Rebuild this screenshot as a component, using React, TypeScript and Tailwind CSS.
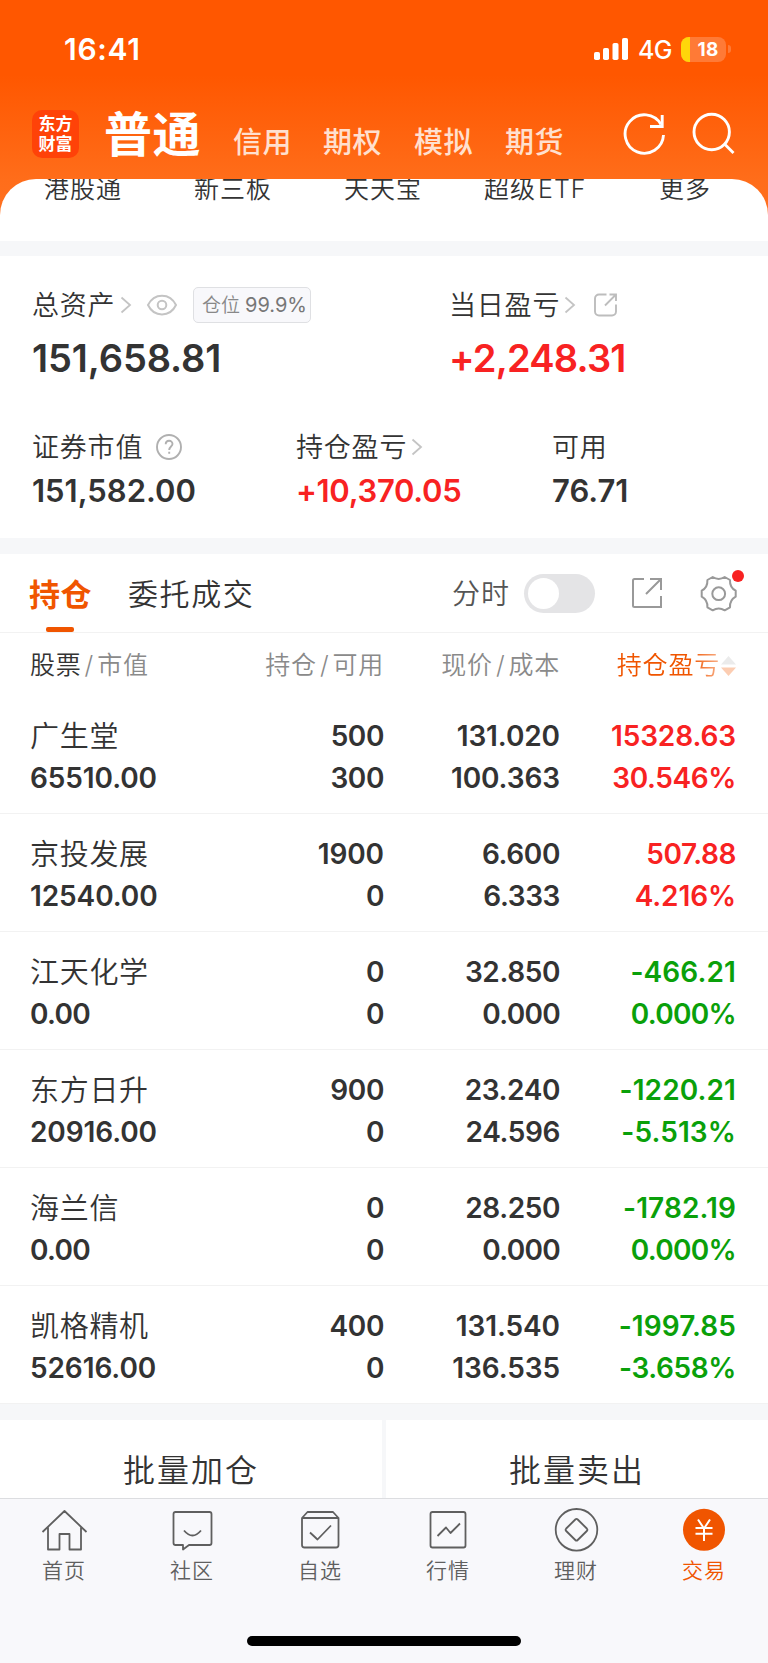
import type { ReactNode } from "react";

const SANS = "font-['Inter','Noto_Sans_CJK_SC',sans-serif]";

function Chevron({ className = "" }: { className?: string }) {
  return (
    <svg className={className} width="12" height="18" viewBox="0 0 12 18" fill="none" stroke="#c4c4c4" strokeWidth="1.8">
      <path d="M1.500 1.500 10 9 1.500 16.500" />
    </svg>
  );
}

function StatusBar() {
  return (
    <div className="flex h-[98px] items-center pl-[64px] pr-[37px] text-white">
      <span className="w-[531px] text-[30px] leading-none font-semibold tracking-[0.7px]">16:41</span>
      <svg width="34" height="24" viewBox="0 0 34 24" fill="#fff" className="mr-[10px] shrink-0">
        <rect x="0" y="15" width="6" height="8" rx="1.8" />
        <rect x="9" y="11" width="6" height="12" rx="1.8" />
        <rect x="18.500" y="6" width="6" height="17" rx="1.800" />
        <rect x="28" y="1" width="6" height="22" rx="1.800" />
      </svg>
      <span className="w-[43px] shrink-0 pt-[3px] text-[25px] leading-none font-medium tracking-[-0.6px]">4G</span>
      <div className="flex h-[25px] w-[45px] shrink-0 items-center overflow-hidden rounded-[8px] bg-[#ff7a36]">
        <span className="h-full w-[9px] bg-[#ffd60a]" />
        <span className="flex-1 text-center text-[19px] leading-none font-bold tracking-[0.3px]">18</span>
      </div>
      <span className="ml-[2px] h-[8px] w-[3px] shrink-0 rounded-r-full bg-[#ff7a36]" />
    </div>
  );
}

function TopNav() {
  return (
    <div className="flex h-[81px] pl-[32px] text-[29px] leading-none font-medium tracking-[0.5px] text-[#ffe0cf]">
      <div className="mt-[12px] flex h-[48px] w-[47px] flex-col items-center justify-center rounded-[10px] bg-[#ff4208] text-[17px] leading-[20px] font-bold tracking-[0px] text-white">
        <span>东方</span>
        <span>财富</span>
      </div>
      <span className="mt-[13px] ml-[25px] w-[129px] text-[48px] font-bold tracking-[0.5px] text-white">普通</span>
      <span className="mt-[30px] w-[90px]">信用</span>
      <span className="mt-[30px] w-[91px]">期权</span>
      <span className="mt-[30px] w-[91px]">模拟</span>
      <span className="mt-[30px] w-[117px]">期货</span>
      <svg className="mt-[12px]" width="46" height="46" viewBox="0 0 46 46" fill="none" stroke="#fff" strokeWidth="2.900">
        <path d="M39 14.500A19.200 19.200 0 1 0 41.500 25" />
        <path d="M40.200 5V16.500H28" />
      </svg>
      <svg className="mt-[12px] ml-[23px]" width="46" height="46" viewBox="0 0 46 46" fill="none" stroke="#fff" strokeWidth="2.900">
        <circle cx="20.700" cy="22" r="17.700" />
        <path d="M33 33.500 42.500 43" />
      </svg>
    </div>
  );
}

function Shortcuts() {
  return (
    <div className="h-[62px] overflow-hidden rounded-t-[36px] bg-white">
      <div className="-mt-[2px] flex pl-[44px] text-[25px] leading-none font-[350] tracking-[1px] text-[#333]">
        <span className="w-[150px]">港股通</span>
        <span className="w-[150px]">新三板</span>
        <span className="w-[140px]">天天宝</span>
        <span className="w-[175px]">超级<span className="ml-[2px]">ETF</span></span>
        <span>更多</span>
      </div>
    </div>
  );
}

function Stat({ label, value, extra, className = "", tone = "text-[#333]" }: { label: string; value: string; extra?: ReactNode; className?: string; tone?: string }) {
  return (
    <div className={className}>
      <div className="flex h-[38px] items-center">
        <span className="text-[27px] leading-none font-[350] tracking-[0.8px] text-[#333]">{label}</span>
        {extra}
      </div>
      <div className={`mt-[9px] text-[31px] leading-none font-semibold ${tone}`}>{value}</div>
    </div>
  );
}

function Assets() {
  return (
    <div className="h-[282px] bg-white pl-[32px]">
      <div className="flex pt-[30px]">
        <div className="w-[417px]">
          <div className="flex h-[38px] items-center">
            <span className="w-[88px] text-[27px] leading-none font-[350] tracking-[0.8px] text-[#333]">总资产</span>
            <Chevron />
            <svg className="ml-[14px]" width="32" height="24" viewBox="0 0 32 24" fill="none" stroke="#c4c4c4" strokeWidth="2">
              <path d="M2 12C8 -.5 24 -.5 30 12 24 24.500 8 24.500 2 12Z" />
              <circle cx="16" cy="12" r="4.300" />
            </svg>
            <div className="ml-[15px] flex h-[36px] w-[118px] items-center rounded-[5px] border border-[#dfe0e3] bg-[#f8f8fb] pl-[8px] text-[#777]">
              <span className="w-[43px] text-[19px] leading-none font-[350] text-[#888]">仓位</span>
              <span className="text-[20px] leading-none">99.9%</span>
            </div>
          </div>
          <div className="mt-[15px] text-[38px] leading-none font-semibold tracking-[-0.1px] text-[#333]">151,658.81</div>
        </div>
        <div>
          <div className="flex h-[38px] items-center">
            <span className="w-[115px] text-[27px] leading-none font-[350] tracking-[0.8px] text-[#333]">当日盈亏</span>
            <Chevron />
            <svg className="ml-[17px]" width="26" height="26" viewBox="0 0 26 26" fill="none" stroke="#bdbdbd" strokeWidth="1.900">
              <path d="M13.500 2.500H6A4 4 0 0 0 2 6.500V19.500A4 4 0 0 0 6 23.500H19A4 4 0 0 0 23 19.500V12.500" />
              <path d="M16.500 2.500H23V9M22.500 3 12 13.500" />
            </svg>
          </div>
          <div className="mt-[15px] text-[38px] leading-none font-semibold tracking-[-0.800px] text-[#f82222]">+2,248.31</div>
        </div>
      </div>
      <div className="flex pt-[51px]">
        <Stat
          className="w-[264px]"
          label="证券市值"
          value="151,582.00"
          extra={
            <svg className="ml-[12px]" width="28" height="28" viewBox="0 0 28 28" fill="none" stroke="#b0b0b0" strokeWidth="1.900">
              <circle cx="14" cy="14" r="12" />
              <path d="M10.700 11.300C10.700 6.600 17.600 6.800 17.500 11 17.400 13.500 14.200 13.600 14.200 17M14.200 18.700V20.800" />
            </svg>
          }
        />
        <Stat className="w-[256px] tracking-[-0.300px]" label="持仓盈亏" value="+10,370.05" tone="text-[#f82222]" extra={<Chevron className="ml-[4px]" />} />
        <Stat label="可用" value="76.71" />
      </div>
    </div>
  );
}

function PositionTabs() {
  return (
    <div className="flex h-[79px] border-b border-[#f2f2f2] bg-white pl-[29px] leading-none">
      <div className="flex w-[99px] flex-col">
        <span className="mt-[25px] text-[31px] font-bold tracking-[0.500px] text-[#f05500]">持仓</span>
        <span className="mt-[17px] ml-[17px] h-[5px] w-[28px] rounded-[2px] bg-[#f05500]" />
      </div>
      <span className="mt-[25px] w-[324px] text-[30px] font-[350] tracking-[1.600px] text-[#333]">委托成交</span>
      <span className="mt-[26px] w-[72px] text-[28px] font-[350] tracking-[1px] text-[#555]">分时</span>
      <div className="mt-[20px] h-[39px] w-[71px] rounded-full bg-[#e4e4e6] p-[4px]">
        <div className="size-[31px] rounded-full bg-white" />
      </div>
      <svg className="mt-[22px] ml-[35px]" width="34" height="34" viewBox="0 0 34 34" fill="none" stroke="#999" strokeWidth="2">
        <path d="M14 3H4.500Q3 3 3 4.500V29.500Q3 31 4.500 31H31V20" />
        <path d="M20 3H31V14M30.500 3.500 16 18" />
      </svg>
      <div className="relative mt-[20px] ml-[35px]">
        <svg width="40" height="40" viewBox="0 0 40 40" fill="none" stroke="#999" strokeWidth="2" strokeLinejoin="round">
          <path d="M13.700 3Q19.700 6.800 25.700 3L31 6Q30.600 13.500 36.700 16.700V22.700Q30.600 26 31 33.300L25.700 36.300Q19.700 32.500 13.700 36.300L8.400 33.300Q8.800 26 2.700 22.700V16.700Q8.800 13.500 8.400 6Z" />
          <circle cx="19.700" cy="19.700" r="6.400" />
        </svg>
        <span className="absolute -top-[4px] left-[33px] size-[12px] rounded-full bg-[#f82222]" />
      </div>
    </div>
  );
}

function TableHead() {
  return (
    <div className="grid h-[63px] grid-cols-[200px_154px_176px_176px] bg-white pt-[20px] pl-[30px] text-[25px] leading-none font-[350] tracking-[0.800px] text-[#8a8a8a]">
      <span>
        <span className="text-[#333]">股票</span>
        <span className="mx-[3px]">/</span>市值
      </span>
      <span className="text-right">
        持仓<span className="mx-[3px]">/</span>可用
      </span>
      <span className="text-right">
        现价<span className="mx-[3px]">/</span>成本
      </span>
      <span className="flex justify-end text-[#f05500]">
        <span className="[mask-image:linear-gradient(to_right,#000_72%,rgba(0,0,0,0.45))]">持仓盈亏</span>
        <svg className="mt-[2px] ml-[1px]" width="15" height="22" viewBox="0 0 15 22">
          <path d="M0 9.500 7.500 1 15 9.500Z" fill="#ebebeb" />
          <path d="M0 12.500H15L7.500 21Z" fill="#fccdb2" />
        </svg>
      </span>
    </div>
  );
}

const UP = "text-[#f82222]";
const DOWN = "text-[#0aa00a]";

const positions = [
  { name: "广生堂", value: "65510.00", held: "500", free: "300", price: "131.020", cost: "100.363", gain: "15328.63", rate: "30.546%", tone: UP },
  { name: "京投发展", value: "12540.00", held: "1900", free: "0", price: "6.600", cost: "6.333", gain: "507.88", rate: "4.216%", tone: UP },
  { name: "江天化学", value: "0.00", held: "0", free: "0", price: "32.850", cost: "0.000", gain: "-466.21", rate: "0.000%", tone: DOWN },
  { name: "东方日升", value: "20916.00", held: "900", free: "0", price: "23.240", cost: "24.596", gain: "-1220.21", rate: "-5.513%", tone: DOWN },
  { name: "海兰信", value: "0.00", held: "0", free: "0", price: "28.250", cost: "0.000", gain: "-1782.19", rate: "0.000%", tone: DOWN },
  { name: "凯格精机", value: "52616.00", held: "400", free: "0", price: "131.540", cost: "136.535", gain: "-1997.85", rate: "-3.658%", tone: DOWN },
];

// Digit spacing: zero-heavy figures are set tighter, figures with narrow ones looser.
function spacing(v: string) {
  if (/^0\./.test(v)) return "tracking-[-0.7px]";
  if (v.includes("1")) return v.startsWith("-") ? "tracking-[0.1px]" : "tracking-[-0.1px]";
  return "tracking-[-0.4px]";
}

function PositionRow({ p }: { p: (typeof positions)[number] }) {
  return (
    <div className="grid h-[118px] grid-cols-[200px_154px_176px_176px] grid-rows-[42px_42px] border-b border-[#f2f2f2] bg-white pt-[19px] pl-[30px] text-right text-[28px] leading-[42px] font-semibold text-[#333]">
      <span className="pt-px text-left text-[29px] font-[350] tracking-[0.700px]">{p.name}</span>
      <span className={spacing(p.held)}>{p.held}</span>
      <span className={spacing(p.price)}>{p.price}</span>
      <span className={`${spacing(p.gain)} ${p.tone}`}>{p.gain}</span>
      <span className={`text-left ${spacing(p.value)}`}>{p.value}</span>
      <span className={spacing(p.free)}>{p.free}</span>
      <span className={spacing(p.cost)}>{p.cost}</span>
      <span className={`${spacing(p.rate)} ${p.tone}`}>{p.rate}</span>
    </div>
  );
}

function BatchActions() {
  return (
    <div className="grid h-[78px] grid-cols-2 gap-[4px] bg-[#f6f7f9] text-center text-[32px] leading-none font-[350] tracking-[2px] text-[#333]">
      <div className="bg-white pt-[35px]">批量加仓</div>
      <div className="bg-white pt-[35px]">批量卖出</div>
    </div>
  );
}

const tabs: { label: string; icon: ReactNode }[] = [
  {
    label: "首页",
    icon: <path d="M1.500 24 23.500 3 45.500 24M7 19.500V41.500H18.500V26H28.500V41.500H40V19.500" />,
  },
  {
    label: "社区",
    icon: <path d="M6.500 4H40.500Q42.500 4 42.500 6V35Q42.500 37 40.500 37H20L14 41.500V37H6.500Q4.500 37 4.500 35V6Q4.500 4 6.500 4ZM15 22.500Q23.500 32.500 32 22.500" />,
  },
  {
    label: "自选",
    icon: <path d="M5 10H41.500V37Q41.500 39.500 39 39.500H7.500Q5 39.500 5 37V10L10.500 4H36L41.500 10M13 24.500 20.500 31.500 34 17.500" />,
  },
  {
    label: "行情",
    icon: <path d="M7.500 4H38.500Q40.500 4 40.500 6V37.500Q40.500 39.500 38.500 39.500H7.500Q5.500 39.500 5.500 37.500V6Q5.500 4 7.500 4ZM12.500 28 21 19.500 25.500 25 35 15.500" />,
  },
  {
    label: "理财",
    icon: (
      <>
        <circle cx="23.500" cy="21.800" r="20.800" />
        <path d="M22.300 11.500 13.200 20.500Q12 21.800 13.200 23L22.300 32Q23.500 33.200 24.700 32L33.800 23Q35 21.800 33.800 20.500L24.700 11.500Q23.500 10.300 22.300 11.500Z" />
      </>
    ),
  },
  {
    label: "交易",
    icon: (
      <>
        <circle cx="23" cy="21.800" r="21" fill="#f05500" stroke="none" />
        <path d="M17 11.500 23 20.500 29 11.500M23 20.500V33M14.500 20H31.500M14.500 25.800H31.500" stroke="#fff" strokeWidth="2" />
      </>
    ),
  },
];

function TabBar() {
  return (
    <div className="flex h-[165px] flex-col items-center border-t border-[#dcdde0] bg-[#f8f8fb]">
      <div className="flex h-[137px] w-full">
        {tabs.map((t, i) => (
          <div key={t.label} className={i === 5 ? "flex w-[128px] flex-col items-center text-[#f05500]" : "flex w-[128px] flex-col items-center text-[#5f5f5f]"}>
            <svg className="mt-[9px]" width="47" height="44" viewBox="0 0 47 44" fill="none" stroke="currentColor" strokeWidth="1.800" strokeLinejoin="round">
              {t.icon}
            </svg>
            <span className="mt-[8px] text-[21px] leading-none font-[350] tracking-[1px]">{t.label}</span>
          </div>
        ))}
      </div>
      <div className="h-[10px] w-[274px] rounded-full bg-black" />
    </div>
  );
}

export default function App() {
  return (
    <div className={`flex h-[1663px] w-[768px] flex-col overflow-hidden bg-[#f6f7f9] ${SANS}`}>
      <header className="h-[241px] shrink-0 bg-[linear-gradient(to_bottom,#ff5700_0px,#ff5700_75px,#ff6d1a_180px,#ff7424_241px)]">
        <StatusBar />
        <TopNav />
        <Shortcuts />
      </header>
      <main className="mt-[15px] flex flex-col">
        <Assets />
        <section className="mt-[16px]">
          <PositionTabs />
          <TableHead />
          {positions.map((p) => (
            <PositionRow key={p.name} p={p} />
          ))}
        </section>
        <div className="mt-[16px]">
          <BatchActions />
        </div>
      </main>
      <TabBar />
    </div>
  );
}
